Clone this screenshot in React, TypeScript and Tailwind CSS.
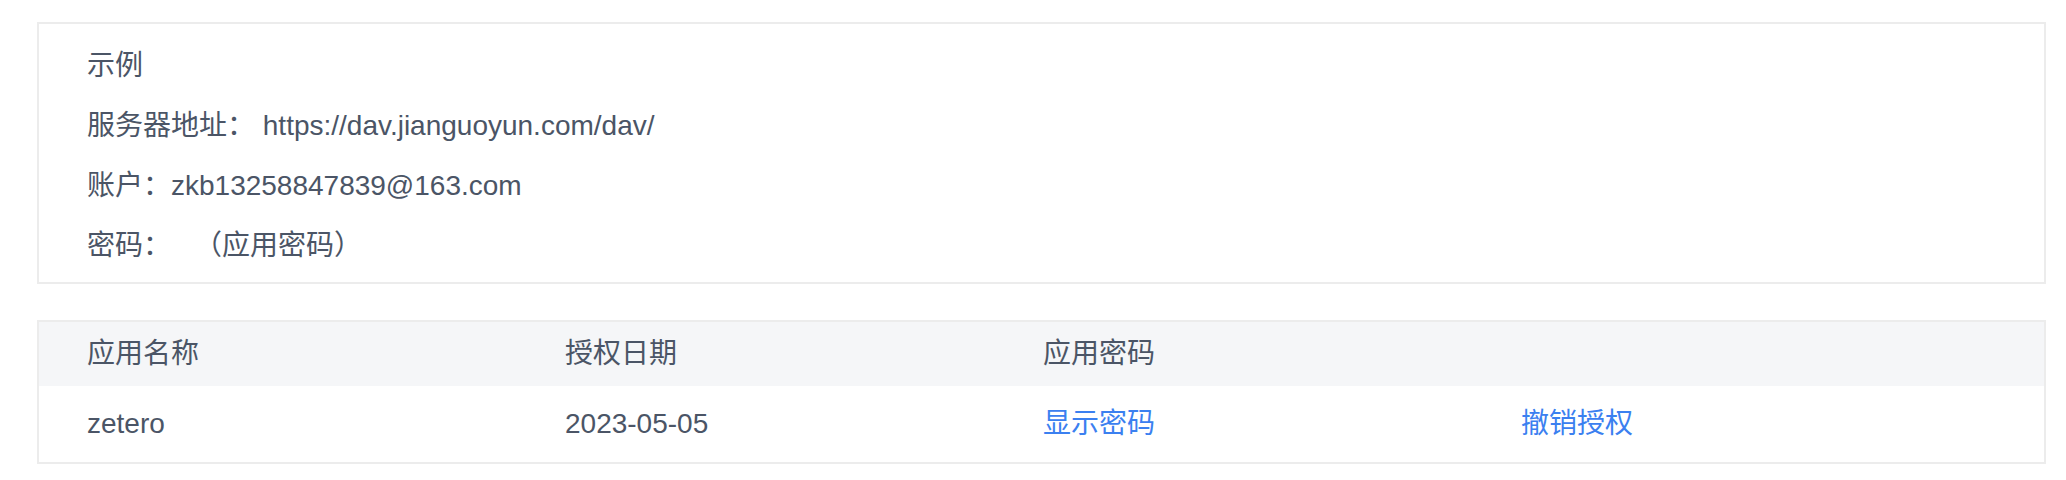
export default function App() {
  const font = { fontFamily: '"Liberation Sans", "Noto Sans CJK SC", sans-serif' };
  return (
    <div className="min-h-screen bg-white pt-[22px] pl-[37px] pr-[20px] text-[28px] text-[#4b5566]" style={font}>
      <div className="border-2 border-[#ececec] px-[48px] pt-[12px] pb-[6px]">
        <div className="h-[60px] flex items-center">示例</div>
        <div className="h-[60px] flex items-center">服务器地址：&nbsp;https://dav.jianguoyun.com/dav/</div>
        <div className="h-[60px] flex items-center">账户：zkb13258847839@163.com</div>
        <div className="h-[60px] flex items-center">
          <span>密码：</span>
          <span className="ml-[23px]">（应用密码）</span>
        </div>
      </div>

      <div className="mt-[36px] border-2 border-[#ececec]">
        <div className="grid grid-cols-[478px_478px_478px_1fr] h-[64px] items-center bg-[#f5f6f8] pl-[48px]">
          <div>应用名称</div>
          <div>授权日期</div>
          <div>应用密码</div>
          <div></div>
        </div>
        <div className="grid grid-cols-[478px_478px_478px_1fr] h-[76px] items-center pl-[48px]">
          <div>zetero</div>
          <div>2023-05-05</div>
          <div className="text-[#3b80f0] cursor-pointer">显示密码</div>
          <div className="text-[#3b80f0] cursor-pointer">撤销授权</div>
        </div>
      </div>
    </div>
  );
}
